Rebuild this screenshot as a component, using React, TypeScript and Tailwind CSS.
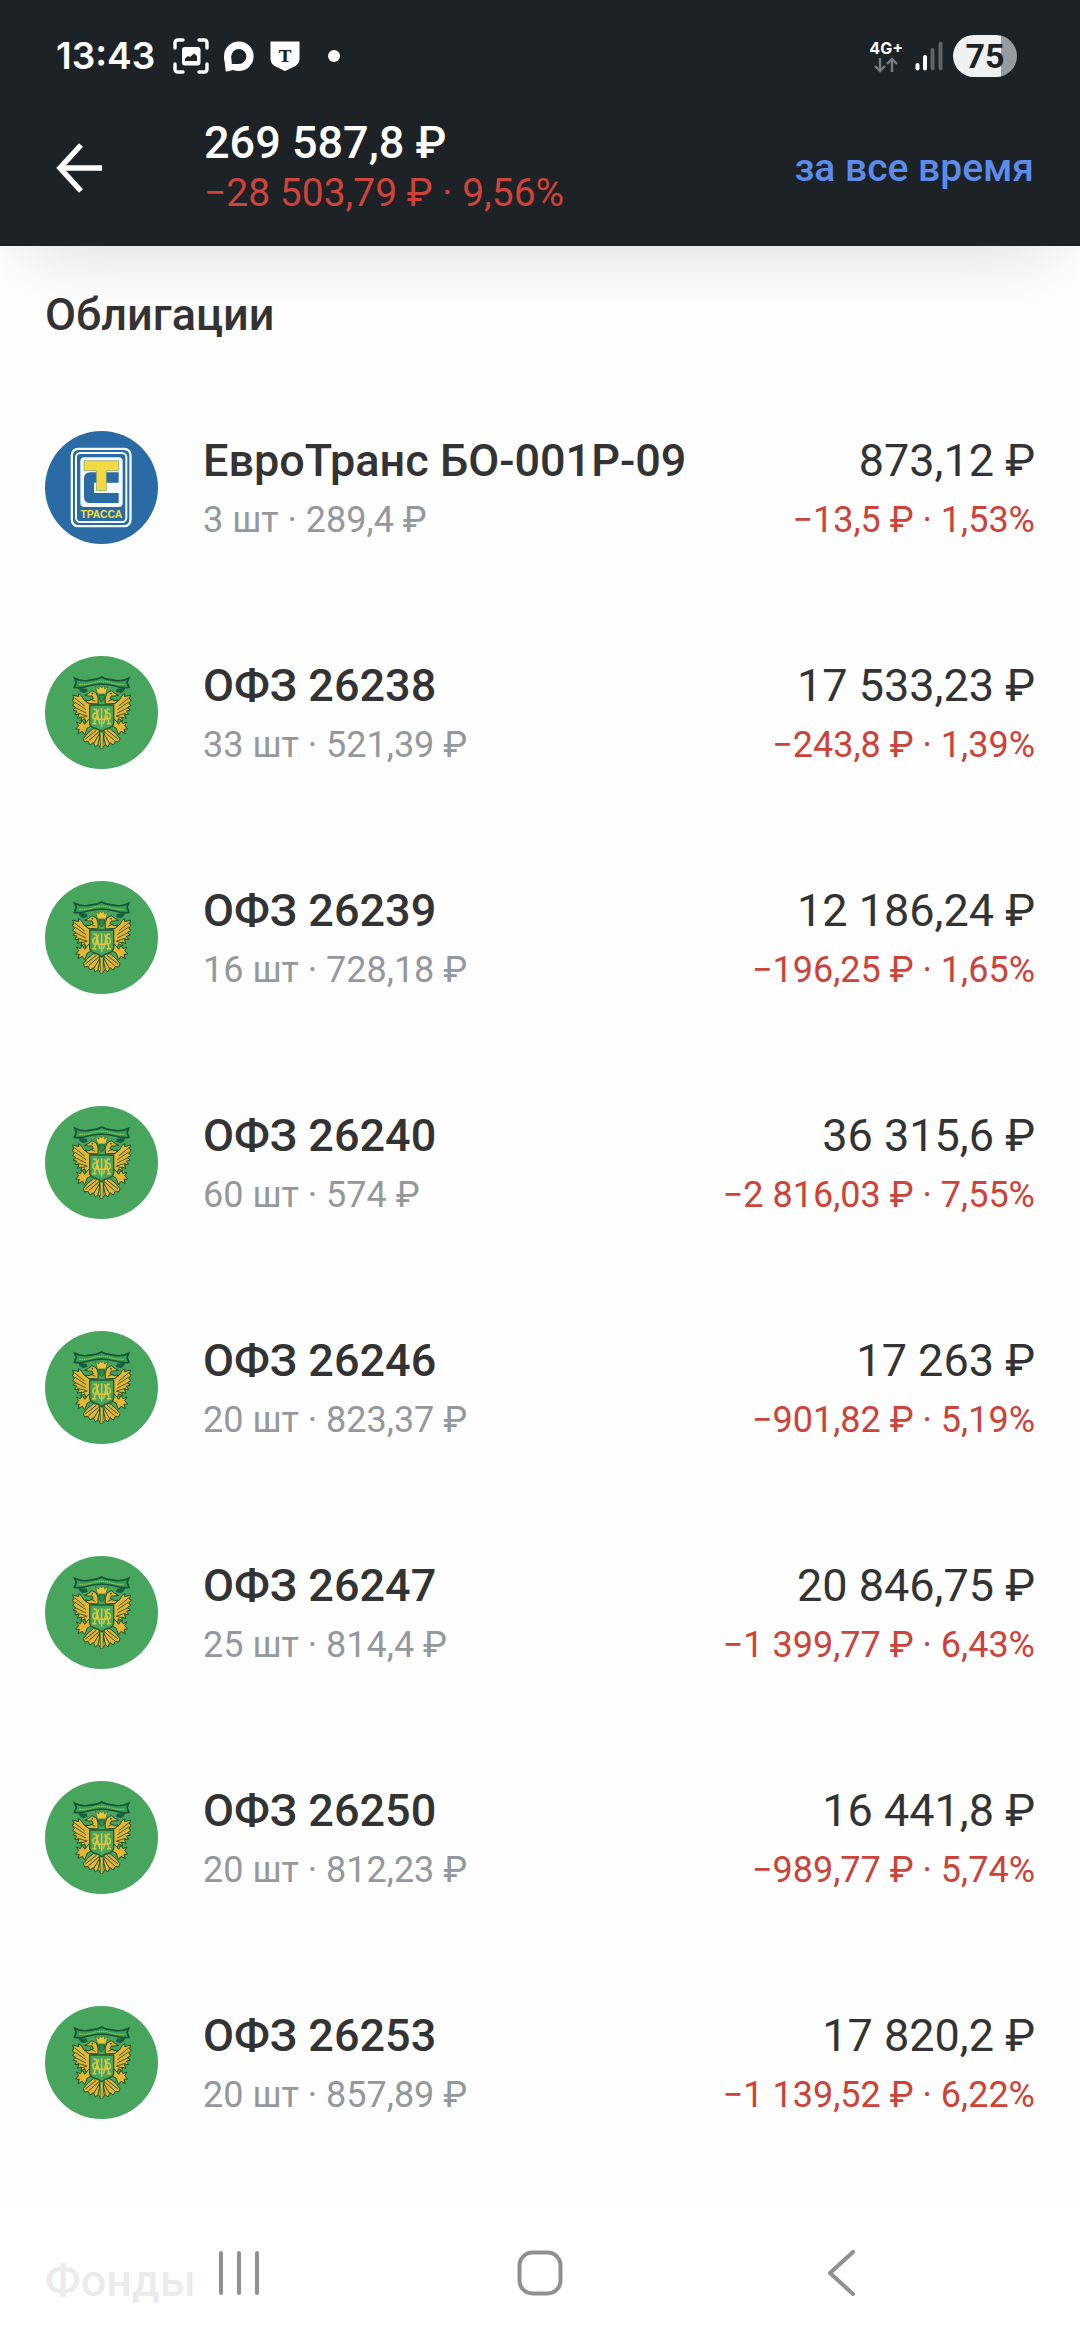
/**
 * Portfolio screen: list of bonds with current value and profit/loss
 * for the selected period.
 */

interface Holding {
  name: string;
  amount: string;
  value: string;
  change: string;
  logo: 'trassa' | 'minfin';
}

const HOLDINGS: Holding[] = [
  { name: 'ЕвроТранс БО-001Р-09', amount: '3 шт · 289,4 ₽', value: '873,12 ₽', change: '−13,5 ₽ · 1,53%', logo: 'trassa' },
  { name: 'ОФЗ 26238', amount: '33 шт · 521,39 ₽', value: '17 533,23 ₽', change: '−243,8 ₽ · 1,39%', logo: 'minfin' },
  { name: 'ОФЗ 26239', amount: '16 шт · 728,18 ₽', value: '12 186,24 ₽', change: '−196,25 ₽ · 1,65%', logo: 'minfin' },
  { name: 'ОФЗ 26240', amount: '60 шт · 574 ₽', value: '36 315,6 ₽', change: '−2 816,03 ₽ · 7,55%', logo: 'minfin' },
  { name: 'ОФЗ 26246', amount: '20 шт · 823,37 ₽', value: '17 263 ₽', change: '−901,82 ₽ · 5,19%', logo: 'minfin' },
  { name: 'ОФЗ 26247', amount: '25 шт · 814,4 ₽', value: '20 846,75 ₽', change: '−1 399,77 ₽ · 6,43%', logo: 'minfin' },
  { name: 'ОФЗ 26250', amount: '20 шт · 812,23 ₽', value: '16 441,8 ₽', change: '−989,77 ₽ · 5,74%', logo: 'minfin' },
  { name: 'ОФЗ 26253', amount: '20 шт · 857,89 ₽', value: '17 820,2 ₽', change: '−1 139,52 ₽ · 6,22%', logo: 'minfin' },
];

export default function App() {
  return (
    <div className="min-h-screen bg-[#fefefe] font-[Roboto,sans-serif] text-[#333333]">
      <header className="bg-[#1d2226] pb-[22px] shadow-[0_24px_80px_-24px_rgba(0,0,0,0.16)]">
        <StatusBar />
        <div className="flex h-28 items-center pr-[46px] pl-14">
          <button aria-label="Назад" className="w-[148px] shrink-0">
            <BackArrow />
          </button>
          <div className="min-w-0 flex-1 pt-0.5">
            <h1 className="text-[45px] leading-[48px] font-medium text-white">269 587,8 ₽</h1>
            <p className="text-[39px] leading-[52px] text-[#d0433b]">−28 503,79 ₽ · 9,56%</p>
          </div>
          <button className="text-[39px] leading-[48px] font-medium text-[#5b8cec]">за все время</button>
        </div>
      </header>

      <main className="px-[45px]">
        <h2 className="pt-[43px] pb-[34px] text-[45px] leading-[52px] font-medium">Облигации</h2>
        <ul>
          {HOLDINGS.map((h) => <HoldingRow key={h.name} holding={h} />)}
        </ul>
        <h2 className="pt-20 text-[45px] leading-[52px] font-medium">Фонды</h2>
      </main>

      <NavigationBar />
    </div>
  );
}

function HoldingRow({ holding }: { holding: Holding }) {
  return (
    <li className="flex items-start pt-14 pb-[54px]">
      {holding.logo === 'trassa' ? <TrassaLogo /> : <MinfinLogo />}
      <div className="ml-[45px] flex min-w-0 flex-1 flex-col gap-[7px] pt-1">
        <span className="text-[45px] leading-[52px] font-medium">{holding.name}</span>
        <span className="text-[36px] leading-[52px] text-[#94989d]">{holding.amount}</span>
      </div>
      <div className="flex shrink-0 flex-col gap-[7px] pt-1 text-right">
        <span className="text-[45px] leading-[52px]">{holding.value}</span>
        <span className="text-[36px] leading-[52px] text-[#cd4239]">{holding.change}</span>
      </div>
    </li>
  );
}

function StatusBar() {
  return (
    <div className="flex h-28 items-center justify-between pr-[63px] pl-14 text-white">
      <div className="flex items-center">
        <span className="mr-[18px] font-[Inter,sans-serif] text-[37px] leading-[48px] font-semibold">13:43</span>
        <svg viewBox="0 0 36 36" className="mr-3.5 size-9" fill="none">
          <path d="M2 10V5q0-3 3-3h5M26 2h5q3 0 3 3v5M34 26v5q0 3-3 3h-5M10 34H5q-3 0-3-3v-5" stroke="#fff" strokeWidth="3.4" strokeLinecap="round" />
          <rect x="9" y="9" width="18.500" height="18.500" rx="3" fill="#fff" />
          <path d="M12 23v-2.500l3-2.500 2 1 4-3.500 3 2.500V23z" fill="#1d2226" />
        </svg>
        <svg viewBox="0 0 31 31" className="mr-4 size-[31px]">
          <circle cx="15.800" cy="15.200" r="14.800" fill="#fff" />
          <path d="M1 15L2.600 29.500q.2 1.300 1.500 1L10 29z" fill="#fff" />
          <circle cx="15.800" cy="15.500" r="7.500" fill="#1d2226" />
          <path d="M8.300 15L8.800 23l7.200 0z" fill="#1d2226" />
        </svg>
        <svg viewBox="0 0 30 30" className="mr-7 size-[30px]">
          <path d="M0.500 0.500h29v17q0 5-4 7.500L15 30 4.500 25q-4-2.500-4-7.500z" fill="#fff" />
          <text x="15" y="20.500" textAnchor="middle" fontFamily="DejaVu Serif, serif" fontWeight="700" fontSize="17" fill="#1d2226">T</text>
        </svg>
        <span className="size-3 rounded-full bg-white" />
      </div>

      <div className="flex items-center">
        <div className="mr-3 flex flex-col items-center">
          <span className="font-[Inter,sans-serif] text-[16px] leading-4 font-bold">4G+</span>
          <svg viewBox="0 0 24 16" className="mt-px h-4 w-6" fill="none" stroke="#777b7e" strokeWidth="2.400">
            <path d="M6 1v13M1 9l5 5 5-5M18 15V2M13 7l5-5 5 5" />
          </svg>
        </div>
        <svg viewBox="0 0 28 30" className="mr-2.5 h-[30px] w-7">
          <rect x="0.500" y="22" width="4" height="7.500" rx="2" fill="#fff" />
          <rect x="8" y="14" width="4" height="15.500" rx="2" fill="#fff" />
          <rect x="15.500" y="7" width="4" height="22.500" rx="2" fill="#5f6366" />
          <rect x="23.500" y="0.500" width="4" height="29" rx="2" fill="#5f6366" />
        </svg>
        <span className="flex h-[42px] w-16 items-center justify-center rounded-full bg-linear-to-r from-[#eff0f1] from-75% to-[#989ba0] to-75% text-[34px] leading-[42px] font-bold text-[#1d2226]">
          75
        </span>
      </div>
    </div>
  );
}

function BackArrow() {
  return (
    <svg viewBox="0 0 46 52" className="h-[52px] w-[46px]" fill="none" stroke="#fff" strokeWidth="5.500">
      <path d="M46 26H4M25 3L4 26l21 23" />
    </svg>
  );
}

function NavigationBar() {
  return (
    <nav className="fixed inset-x-0 bottom-0 grid h-[135px] grid-cols-3 bg-white/90 px-22">
      <button aria-label="Недавние" className="flex items-center justify-center">
        <svg viewBox="0 0 42 44" className="h-11 w-[42px]" stroke="#909090" strokeWidth="4" strokeLinecap="round">
          <path d="M3 2v40M21 2v40M39 2v40" />
        </svg>
      </button>
      <button aria-label="Домой" className="flex items-center justify-center">
        <svg viewBox="0 0 46 46" className="size-[46px]" fill="none" stroke="#909090" strokeWidth="4">
          <rect x="2.500" y="2.500" width="41" height="41" rx="13" />
        </svg>
      </button>
      <button aria-label="Назад" className="flex items-center justify-center">
        <svg viewBox="0 0 28 46" className="h-[46px] w-7" fill="none" stroke="#909090" strokeWidth="4" strokeLinecap="round" strokeLinejoin="round">
          <path d="M26 2L3 23l23 21" />
        </svg>
      </button>
    </nav>
  );
}

function TrassaLogo() {
  return (
    <svg viewBox="45 63 339 339" className="size-[113px] shrink-0">
      <circle cx="214.500" cy="232.500" r="169.500" fill="#2a6aa5" />
      <rect x="125.500" y="116.500" width="176" height="232" rx="19" fill="none" stroke="#f4f9fd" strokeWidth="7" />
      <rect x="138" y="129" width="151" height="207" rx="13" fill="none" stroke="#f4f9fd" strokeWidth="6" />
      <rect x="151" y="142" width="127" height="149" rx="12" fill="#f4f9fd" />
      <path d="M266 187H181q-19 0-19 19v54q0 19 19 19h85v-30h-74v-31h74z" fill="#2a6aa5" />
      <path d="M162 152h104v30h-37v60h-30v-60h-37z" fill="#f3da42" stroke="#7d9a72" strokeWidth="2" />
      <text x="214" y="324" textAnchor="middle" fontFamily="Liberation Sans, sans-serif" fontWeight="700" fontSize="31" fill="#f0e13d">ТРАССА</text>
    </svg>
  );
}

// One half of the eagle; the other half is the same group mirrored.
function EagleHalf() {
  return (
    <g strokeLinejoin="round">
      {/* wing */}
      <path
        d="M194 193L176 190 162 180 153 166 145 161 146 170 128 165 132 177 126 180 134 190 127 196 138 203 129 210 141 214 134 223 147 224 142 235 155 231 153 243 164 236 168 248 180 236 180 200z"
        fill="#e6b534" stroke="#1d5030" strokeWidth="3"
      />
      <path d="M133 173L164 198M134 186L168 209M136 203L168 219M142 219L170 228M153 234L172 228" stroke="#3b5d27" strokeWidth="3" fill="none" />
      {/* head and neck */}
      <path d="M204 192Q207 172 199 159L186 152 176 160 164 166 175 168 186 168 190 176 177 182 166 180 174 190z" fill="#e6b534" stroke="#1d5030" strokeWidth="3" />
      <circle cx="187" cy="161" r="2.500" fill="#1d5030" />
      <path d="M180 177L196 184" stroke="#1d5030" strokeWidth="2.500" />
      {/* leg and claw */}
      <path d="M176 238L188 256 172 264 164 284 157 274 144 281 148 268 137 267 146 257 139 246 151 251 157 241 164 253z" fill="#e6b534" stroke="#1d5030" strokeWidth="3" />
      {/* tail feathers */}
      <path d="M207 268L190 266 172 281 160 296 164 306 174 304 180 315 190 308 196 321 205 313 213 327z" fill="#e6b534" stroke="#1d5030" strokeWidth="3" />
      <path d="M206 276L176 302M209 280L192 309M211 284L204 312M199 271L166 297" stroke="#1d5030" strokeWidth="3" />
    </g>
  );
}

function MinfinLogo() {
  return (
    <svg viewBox="45 48 339 339" className="size-[113px] shrink-0">
      <circle cx="214.500" cy="217.500" r="169.500" fill="#47a55e" />
      <path d="M145 143L170 146 173 155 159 160 149 153zM286 143L261 146 258 155 272 160 282 153z" fill="#176044" />
      <EagleHalf />
      <g transform="translate(430 0) scale(-1 1)">
        <EagleHalf />
      </g>
      <path d="M203 162L196 139 206 147 209 136 215 144 221 136 224 147 234 139 227 162z" fill="#edc33c" stroke="#2f6a33" strokeWidth="2" />
      <path d="M206 165L208 179 215 185 222 179 224 165z" fill="#2e8b49" stroke="#1d5030" strokeWidth="2" />
      {/* motto ribbon */}
      <path d="M134 115Q151 124 171 122L190 119Q203 118 215 111 227 118 240 119L260 122Q279 124 296 115L291 127 297 142Q275 145 256 138 235 133 215 132 195 133 174 138 155 145 133 142L139 127z" fill="#35a052" stroke="#185337" strokeWidth="5" />
      <path d="M148 133Q179 134 190 127 214 121 240 127 252 134 282 133" fill="none" stroke="#b8c75b" strokeWidth="3" strokeDasharray="4 2" />
      {/* shield with monogram */}
      <path d="M179 195h72v53q0 10-12 15-16 4-24 12-8-8-24-12-12-5-12-15z" fill="#47a55e" stroke="#245a2d" strokeWidth="4" />
      <g fill="none" stroke="#dcc540" strokeWidth="4.500">
        <path d="M190 208l8 0 12 44M240 208l-8 0-12 44M206 208l-14 43M224 208l14 43" />
        <path d="M215 205v55M187 251h12M231 251h12M201 238h28" />
        <ellipse cx="196" cy="228" rx="7" ry="9" />
        <ellipse cx="234" cy="228" rx="7" ry="9" />
      </g>
      <path d="M215 278v47" stroke="#e6b534" strokeWidth="6" />
    </svg>
  );
}
